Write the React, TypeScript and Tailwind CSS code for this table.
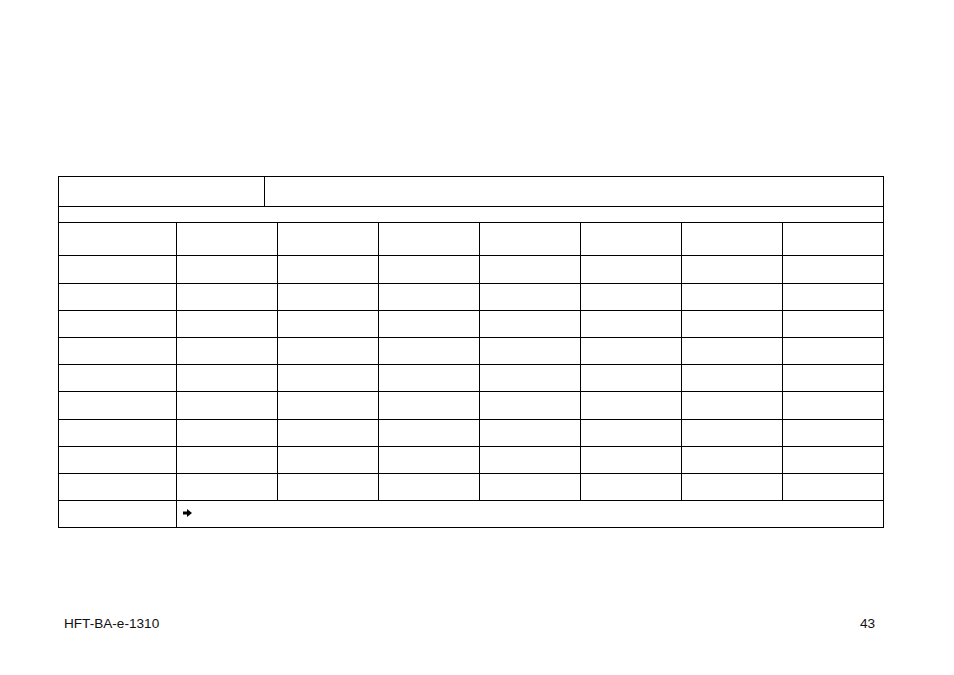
const rowHeights = [28, 27, 27, 27, 27, 28, 27, 27, 27];
const dataCols = 7;

function Arrow() {
  return (
    <svg width="9" height="8" viewBox="0 0 9 8" className="block">
      <path d="M0 2.4 H4 V0 L9 4 L4 8 V5.6 H0 Z" fill="#000" />
    </svg>
  );
}

export default function App() {
  return (
    <div className="relative w-[954px] h-[675px] bg-white font-['Liberation_Sans',Arial,sans-serif] text-black">
      <div className="pt-[176px] pl-[58px]">
        <div className="w-[826px] border-l border-t border-black">
          {/* header row */}
          <div className="flex h-[30px] border-b border-black">
            <div className="w-[206px] border-r border-black" />
            <div className="flex-1 border-r border-black" />
          </div>
          {/* spanning row */}
          <div className="h-[16px] border-b border-r border-black" />
          {/* column heads */}
          <div className="flex h-[33px] border-b border-black">
            <div className="w-[118px] border-r border-black" />
            {Array.from({ length: dataCols }).map((_, i) => (
              <div key={i} className="w-[101px] border-r border-black" />
            ))}
          </div>
          {rowHeights.map((h, r) => (
            <div
              key={r}
              className={`flex border-b border-black ${h === 28 ? "h-[28px]" : "h-[27px]"}`}
            >
              <div className="w-[118px] border-r border-black" />
              {Array.from({ length: dataCols }).map((_, i) => (
                <div key={i} className="w-[101px] border-r border-black" />
              ))}
            </div>
          ))}
          {/* last row */}
          <div className="flex h-[27px] border-b border-black">
            <div className="w-[118px] border-r border-black" />
            <div className="flex-1 border-r border-black flex items-center pl-[6px] pb-[2px]">
              <Arrow />
            </div>
          </div>
        </div>
      </div>

      <div className="flex justify-between pl-[64px] pr-[79px] pt-[88px] text-[13.6px] leading-[16px] text-[#111]">
        <span>HFT-BA-e-1310</span>
        <span>43</span>
      </div>
    </div>
  );
}
